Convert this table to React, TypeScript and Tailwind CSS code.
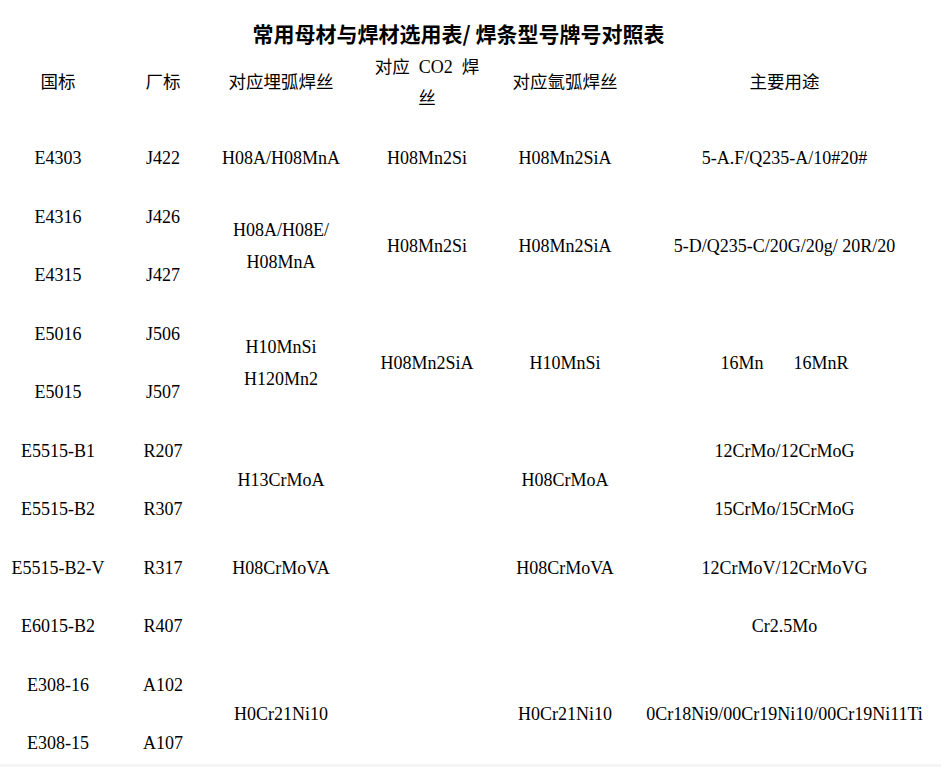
import React from "react";

type Cell = { t: React.ReactNode; span?: boolean };

const cjk = { fontFamily: '"Noto Sans CJK SC", "Noto Sans", sans-serif' };
const serif = { fontFamily: '"Liberation Serif", "Noto Sans CJK SC", serif' };

const rows: Cell[][] = [
  [
    { t: "E4303" },
    { t: "J422" },
    { t: "H08A/H08MnA" },
    { t: "H08Mn2Si" },
    { t: "H08Mn2SiA" },
    { t: "5-A.F/Q235-A/10#20#" },
  ],
  [
    { t: "E4316" },
    { t: "J426" },
    { t: ["H08A/H08E/", "H08MnA"], span: true },
    { t: "H08Mn2Si", span: true },
    { t: "H08Mn2SiA", span: true },
    { t: "5-D/Q235-C/20G/20g/ 20R/20", span: true },
  ],
  [{ t: "E4315" }, { t: "J427" }],
  [
    { t: "E5016" },
    { t: "J506" },
    { t: ["H10MnSi", "H120Mn2"], span: true },
    { t: "H08Mn2SiA", span: true },
    { t: "H10MnSi", span: true },
    {
      t: (
        <span>
          16Mn<span className="ml-[30px]">16MnR</span>
        </span>
      ),
      span: true,
    },
  ],
  [{ t: "E5015" }, { t: "J507" }],
  [
    { t: "E5515-B1" },
    { t: "R207" },
    { t: "H13CrMoA", span: true },
    { t: "", span: true },
    { t: "H08CrMoA", span: true },
    { t: "12CrMo/12CrMoG" },
  ],
  [{ t: "E5515-B2" }, { t: "R307" }, { t: "15CrMo/15CrMoG" }],
  [
    { t: "E5515-B2-V" },
    { t: "R317" },
    { t: "H08CrMoVA" },
    { t: "" },
    { t: "H08CrMoVA" },
    { t: "12CrMoV/12CrMoVG" },
  ],
  [
    { t: "E6015-B2" },
    { t: "R407" },
    { t: "" },
    { t: "" },
    { t: "" },
    { t: "Cr2.5Mo" },
  ],
  [
    { t: "E308-16" },
    { t: "A102" },
    { t: "H0Cr21Ni10", span: true },
    { t: "", span: true },
    { t: "H0Cr21Ni10", span: true },
    { t: "0Cr18Ni9/00Cr19Ni10/00Cr19Ni11Ti", span: true },
  ],
  [{ t: "E308-15" }, { t: "A107" }],
];

const headers = ["国标", "厂标", "对应埋弧焊丝", null, "对应氩弧焊丝", "主要用途"];

export default function App() {
  return (
    <div className="h-[767px] flex flex-col bg-white text-black overflow-hidden">
      <div className="flex-1 overflow-hidden">
        <h1
          className="pt-[17px] pr-[24px] text-center text-[21px] font-bold leading-[32px]"
          style={cjk}
        >
          常用母材与焊材选用表/ 焊条型号牌号对照表
        </h1>

        <div
          className="grid grid-cols-[116px_94px_142px_150px_126px_313px] h-[64px] items-center text-center text-[17.5px]"
          style={cjk}
        >
          {headers.map((h, i) =>
            h ? (
              <div key={i} className="leading-[30px]">
                {h}
              </div>
            ) : (
              <div key={i} className="leading-[30px]">
                <div>
                  对应
                  <span className="mx-[9px] text-[18px]" style={serif}>
                    CO2
                  </span>
                  焊
                </div>
                <div>丝</div>
              </div>
            )
          )}
        </div>

        <div
          className="mt-[16px] grid grid-cols-[116px_94px_142px_150px_126px_313px] auto-rows-[58.5px] text-center text-[18px]"
          style={serif}
        >
          {rows.flat().map((c, i) => (
            <div
              key={i}
              className={
                "flex flex-col items-center justify-center whitespace-nowrap leading-[32px] " +
                (c.span ? "row-span-2" : "")
              }
            >
              {Array.isArray(c.t)
                ? c.t.map((line, j) => <div key={j}>{line}</div>)
                : c.t}
            </div>
          ))}
        </div>
      </div>
      <div className="h-[3px] bg-[#f5f5f5]" />
    </div>
  );
}
